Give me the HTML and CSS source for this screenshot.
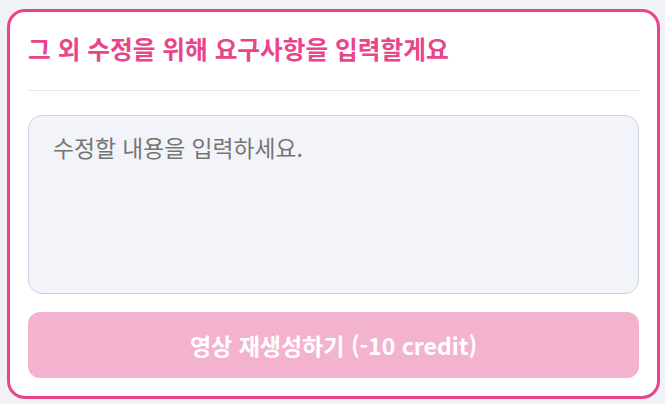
FILE: index.html
```html
<!DOCTYPE html>
<html lang="ko">
<head>
<meta charset="utf-8">
<link rel="stylesheet" href="styles.css">
</head>
<body>
<div class="page">
  <section class="card">
    <h2 class="card-title">그 외 수정을 위해 요구사항을 입력할게요</h2>
    <textarea class="request" placeholder="수정할 내용을 입력하세요."></textarea>
    <button class="submit" type="button">영상 재생성하기 (-10 credit)</button>
  </section>
</div>
</body>
</html>
```
FILE: styles.css
```css
html, body {
  margin: 0;
  padding: 0;
  background: #f1f2f6;
}
.page {
  padding: 9px 5px 5px 7px;
  font-family: "Noto Sans CJK KR", "Noto Sans", sans-serif;
}
.card {
  box-sizing: border-box;
  height: 390px;
  background: #ffffff;
  border: 3px solid #e8458b;
  border-radius: 18px;
  padding: 18px;
  display: flex;
  flex-direction: column;
}
.card-title {
  margin: 0;
  font-size: 24.7px;
  font-weight: 700;
  color: #e8458b;
  line-height: 37px;
  padding-bottom: 23px;
  border-bottom: 1px solid #e6e7eb;
}
.request {
  box-sizing: border-box;
  margin-top: 24px;
  height: 180px;
  width: 100%;
  resize: none;
  background: #f3f4f9;
  border: 1px solid #cbd3e1;
  border-radius: 14px;
  padding: 15px 24px;
  font-family: inherit;
  font-size: 22.8px;
  line-height: 34px;
  color: #333;
  outline: none;
}
.request::placeholder {
  color: #757575;
}
.submit {
  margin-top: 18px;
  height: 66px;
  width: 100%;
  border: none;
  border-radius: 12px;
  background: #f3b3cf;
  color: #ffffff;
  font-family: inherit;
  font-size: 23px;
  font-weight: 700;
}
```
